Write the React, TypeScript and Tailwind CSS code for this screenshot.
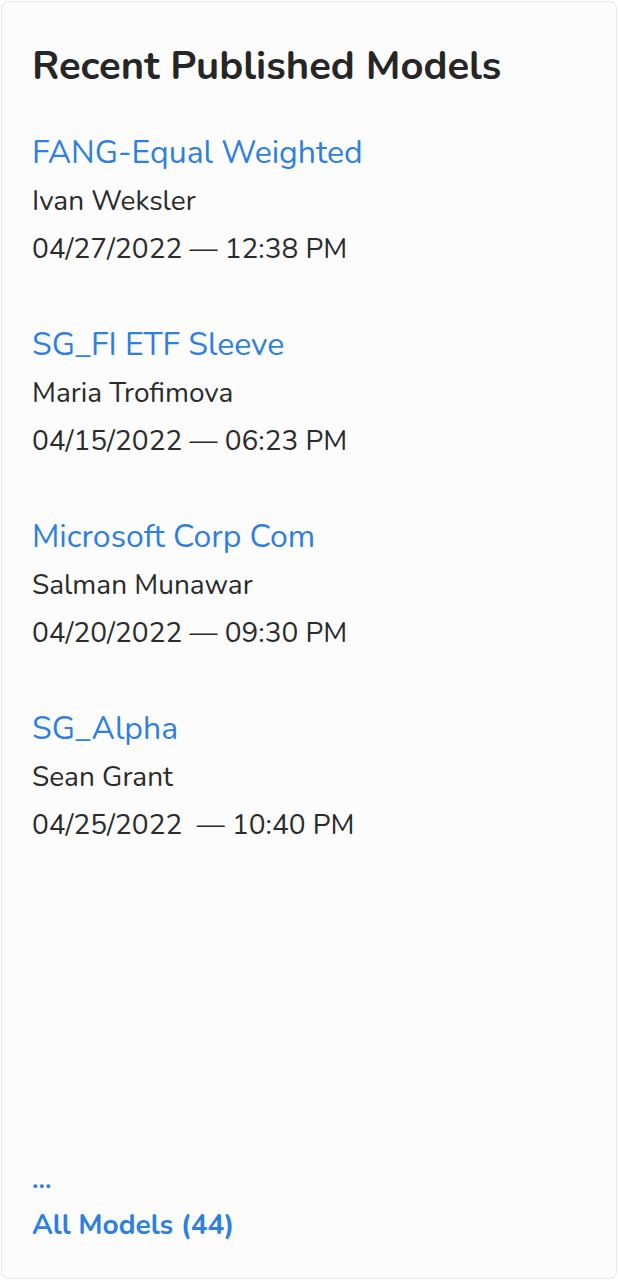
import React from "react";

interface Model {
  name: string;
  author: string;
  published: string;
}

const MODELS: Model[] = [
  { name: "FANG-Equal Weighted", author: "Ivan Weksler", published: "04/27/2022 \u2014 12:38 PM" },
  { name: "SG_FI ETF Sleeve", author: "Maria Trofimova", published: "04/15/2022 \u2014 06:23 PM" },
  { name: "Microsoft Corp Com", author: "Salman Munawar", published: "04/20/2022 \u2014 09:30 PM" },
  { name: "SG_Alpha", author: "Sean Grant", published: "04/25/2022 \u00a0\u2014 10:40 PM" },
];

export default function App() {
  return (
    <div className="h-[1280px] w-[618px] bg-white p-px font-['Nunito','Lato',sans-serif]">
      <div className="flex h-full flex-col rounded-lg border border-[#e6e6e6] bg-[#fcfcfc] pl-[30px] pr-8 pb-[30px] pt-[38px]">
        <h2 className="text-[40px] font-bold leading-[52px] text-[#262626]">Recent Published Models</h2>

        <div className="mt-[37px] flex flex-col gap-[48px]">
          {MODELS.map((m) => (
            <div key={m.name} className="flex flex-col">
              <a href="#" className="text-[32px] leading-[48px] text-[#2f7fdf]">
                {m.name}
              </a>
              <span className="text-[28px] leading-[48px] text-[#2b2b2b]">{m.author}</span>
              <span className="text-[28px] leading-[48px] text-[#2b2b2b] whitespace-pre">{m.published}</span>
            </div>
          ))}
        </div>

        <div className="mt-auto flex flex-col">
          <span className="text-[26px] font-bold leading-[44px] text-[#2f7fdf]">...</span>
          <a href="#" className="text-[28px] font-bold leading-[46px] text-[#2f7fdf]">
            All Models (44)
          </a>
        </div>
      </div>
    </div>
  );
}
